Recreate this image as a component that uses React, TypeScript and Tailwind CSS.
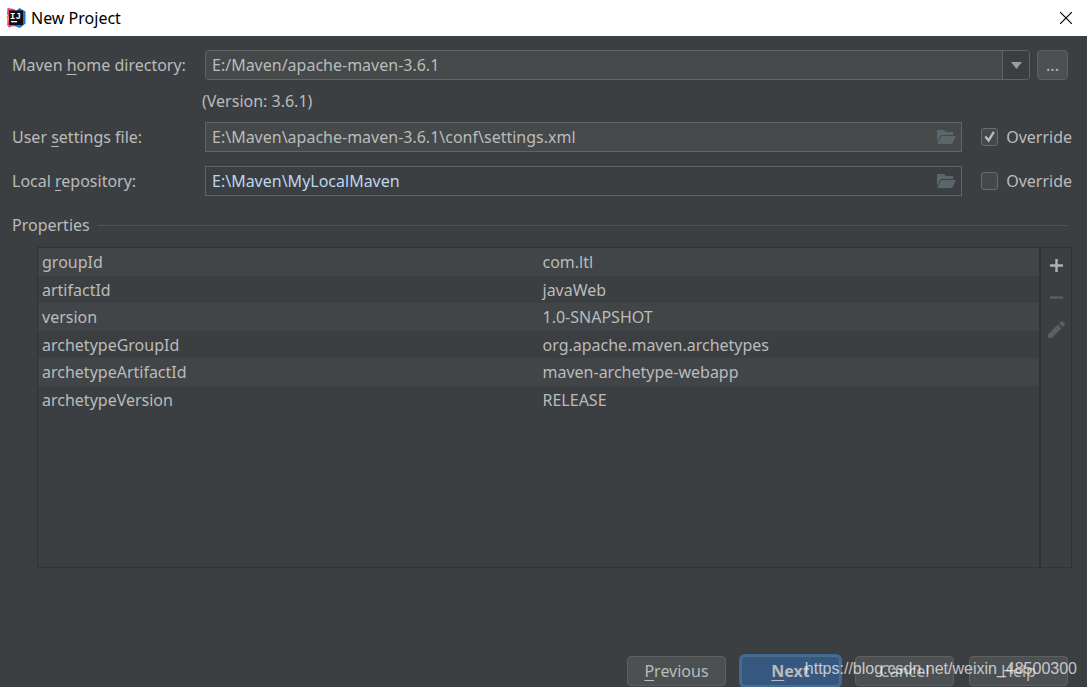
import { useState } from "react";

const PROPERTIES = [
  { name: "groupId", value: "com.ltl" },
  { name: "artifactId", value: "javaWeb" },
  { name: "version", value: "1.0-SNAPSHOT" },
  { name: "archetypeGroupId", value: "org.apache.maven.archetypes" },
  { name: "archetypeArtifactId", value: "maven-archetype-webapp" },
  { name: "archetypeVersion", value: "RELEASE" },
];

const BUTTON = "h-[30px] w-[99px] rounded-[4px] border border-[#5e6060] bg-[#4c5052]";

function Mnemonic({ children }: { children: React.ReactNode }) {
  return <span className="underline decoration-1 underline-offset-[3px]">{children}</span>;
}

function IdeaLogo() {
  return (
    <svg className="h-5 w-5" viewBox="0 0 20 20" aria-hidden="true">
      <path d="M1.500 0 8 1l3 3-6 8-4-1 1-3-1-2z" fill="#e8416b" />
      <path d="M.5 8.500 4 7v6l-2.500 1z" fill="#fc8a4a" />
      <path d="M1.500 13 5 11l7 6-9 2.500L1 17z" fill="#ef4f84" />
      <path d="M10 3 13.500 0 19.500 3.500v12L14 20l-6-2z" fill="#1478e0" />
      <rect x="3" y="2.500" width="14" height="14.500" fill="#120f10" />
      <text x="4" y="10.500" fontSize="9" fontWeight="700" fill="#fff" fontFamily="Liberation Mono, monospace">
        IJ
      </text>
      <rect x="5" y="13" width="6" height="1.300" fill="#fff" />
    </svg>
  );
}

function FolderIcon() {
  return (
    <svg className="h-[14px] w-[19px]" viewBox="0 0 19 14" fill="#5b666a" aria-hidden="true">
      <path d="M0 0h7l2 2h7v3H4L0 12z" />
      <path d="M4.500 6H19l-4 8H0z" />
    </svg>
  );
}

type PathFieldProps = {
  id: string;
  label: React.ReactNode;
  defaultValue: string;
  overridden: boolean;
  className: string;
};

function PathField({ id, label, defaultValue, overridden, className }: PathFieldProps) {
  const [checked, setChecked] = useState(overridden);

  return (
    <div className="flex items-center">
      <label htmlFor={id} className="w-[193px] shrink-0">{label}</label>
      <div className={`flex h-[30px] min-w-0 flex-1 items-center border border-[#646464] pr-[5px] ${className}`}>
        <input id={id} defaultValue={defaultValue} className="h-full min-w-0 flex-1 bg-transparent px-1.5 outline-none" />
        <button type="button" aria-label="Browse">
          <FolderIcon />
        </button>
      </div>
      <label className="ml-[19px] flex w-[91px] shrink-0 items-center gap-2">
        <span className="relative flex h-[18px] w-[18px]">
          <input
            type="checkbox"
            checked={checked}
            onChange={(e) => setChecked(e.target.checked)}
            className="h-full w-full appearance-none rounded-[3px] border border-[#6b6b6b] bg-[#43494a]"
          />
          {checked && (
            <svg className="pointer-events-none absolute inset-0" viewBox="0 0 18 18" fill="none" stroke="#bbbbbb" strokeWidth="2.500">
              <path d="M4.500 9 8 13 13.500 4" />
            </svg>
          )}
        </span>
        Override
      </label>
    </div>
  );
}

export default function App() {
  return (
    <div className="relative flex min-h-screen flex-col bg-[#3c3f41] font-['Noto_Sans','Open_Sans',sans-serif] text-base leading-6 text-[#bbbbbb]">
      {/* Title bar */}
      <header className="flex h-9 items-center bg-white pr-[15px] pl-1.5 text-black">
        <IdeaLogo />
        <h1 className="ml-[5px] flex-1">New Project</h1>
        <button type="button" aria-label="Close">
          <svg className="h-3 w-3" viewBox="0 0 12 12" stroke="#000" strokeWidth="1.200">
            <path d="M0 0 12 12M12 0 0 12" />
          </svg>
        </button>
      </header>

      <main className="flex flex-1 flex-col pt-[14px] pr-[15px] pb-px pl-3">
        {/* Maven settings */}
        <div className="flex items-center pr-1">
          <label htmlFor="maven-home" className="w-[193px] shrink-0">
            Maven <Mnemonic>h</Mnemonic>ome directory:
          </label>
          <div className="relative min-w-0 flex-1">
            <select
              id="maven-home"
              className="block h-[30px] w-full appearance-none rounded-[4px] border border-[#646464] bg-[#45494a] px-1.5 outline-none"
            >
              <option>E:/Maven/apache-maven-3.6.1</option>
            </select>
            <span className="pointer-events-none absolute inset-y-px right-px flex w-[27px] items-center justify-center rounded-r-[3px] border-l border-[#646464] bg-[#3c3f41]">
              <svg className="h-[7px] w-[11px]" viewBox="0 0 11 7" fill="#9a9da0">
                <path d="M0 0h11L5.500 7z" />
              </svg>
            </span>
          </div>
          <button
            type="button"
            className="ml-[7px] h-[30px] w-[31px] rounded-[4px] border border-[#5e6060] bg-[#4c5052]"
          >
            ...
          </button>
        </div>
        <p className="my-[9px] pl-[190px]">(Version: 3.6.1)</p>
        <div className="flex flex-col gap-[14px]">
          <PathField
            id="settings-file"
            label={<>User <Mnemonic>s</Mnemonic>ettings file:</>}
            defaultValue="E:\Maven\apache-maven-3.6.1\conf\settings.xml"
            overridden={true}
            className="bg-[#45494a]"
          />
          <PathField
            id="local-repository"
            label={<>Local <Mnemonic>r</Mnemonic>epository:</>}
            defaultValue="E:\Maven\MyLocalMaven"
            overridden={false}
            className="text-[#bcd6ee]"
          />
        </div>

        {/* Properties */}
        <div className="mt-[17px] flex items-center gap-2 pr-1">
          <h2>Properties</h2>
          <span className="h-px flex-1 bg-[#515456]" />
        </div>
        <section className="mt-[10px] ml-[25px] flex flex-1 border border-[#323232]">
          <div className="flex-1">
            <table className="w-full table-fixed border-collapse text-left">
              <tbody>
                {PROPERTIES.map((prop) => (
                  <tr key={prop.name} className="odd:h-7 odd:bg-[#414547] even:h-[27px]">
                    <td className="w-1/2 p-0 pl-1">{prop.name}</td>
                    <td className="w-1/2 p-0 pl-1">{prop.value}</td>
                  </tr>
                ))}
              </tbody>
            </table>
          </div>
          <div className="flex w-8 flex-col items-center gap-[10px] border-l-2 border-[#323232] pt-1.5">
            <button type="button" aria-label="Add" className="flex h-[22px] w-[22px] items-center justify-center">
              <svg className="h-[13px] w-[13px]" viewBox="0 0 13 13" fill="#afb1b3">
                <path d="M5.300 0h2.400v5.300H13v2.400H7.700V13H5.300V7.700H0V5.300h5.300z" />
              </svg>
            </button>
            <button type="button" aria-label="Remove" className="flex h-[22px] w-[22px] items-center justify-center">
              <svg className="h-[13px] w-[13px]" viewBox="0 0 13 13" fill="#606264">
                <path d="M0 5.500h13v2H0z" />
              </svg>
            </button>
            <button type="button" aria-label="Edit" className="flex h-[22px] w-[22px] items-center justify-center">
              <svg className="h-[17px] w-[17px]" viewBox="0 0 17 17" fill="#5c5e60">
                <path d="M0 13.200 9.800 3.400l3.800 3.800L3.800 17H0zM11 2.300 12.700.6q.9-.9 1.800 0l2 2q.9.900 0 1.800l-1.700 1.700z" />
              </svg>
            </button>
          </div>
        </section>

        {/* Wizard buttons */}
        <footer className="mt-[88px] flex justify-end gap-[15px] pr-1">
          <button type="button" className={BUTTON}>
            <Mnemonic>P</Mnemonic>revious
          </button>
          <button
            type="button"
            className="h-[30px] w-[99px] rounded-[4px] border border-[#4c708c] bg-[#365880] font-bold ring-2 ring-[#43698e]"
          >
            <Mnemonic>N</Mnemonic>ext
          </button>
          <button type="button" className={BUTTON}>Cancel</button>
          <button type="button" className={BUTTON}>Help</button>
        </footer>
      </main>

      <p className="pointer-events-none absolute right-2.5 bottom-1.5 font-['Liberation_Sans',sans-serif] text-base text-white/70">
        https://blog.csdn.net/weixin_48500300
      </p>
    </div>
  );
}
